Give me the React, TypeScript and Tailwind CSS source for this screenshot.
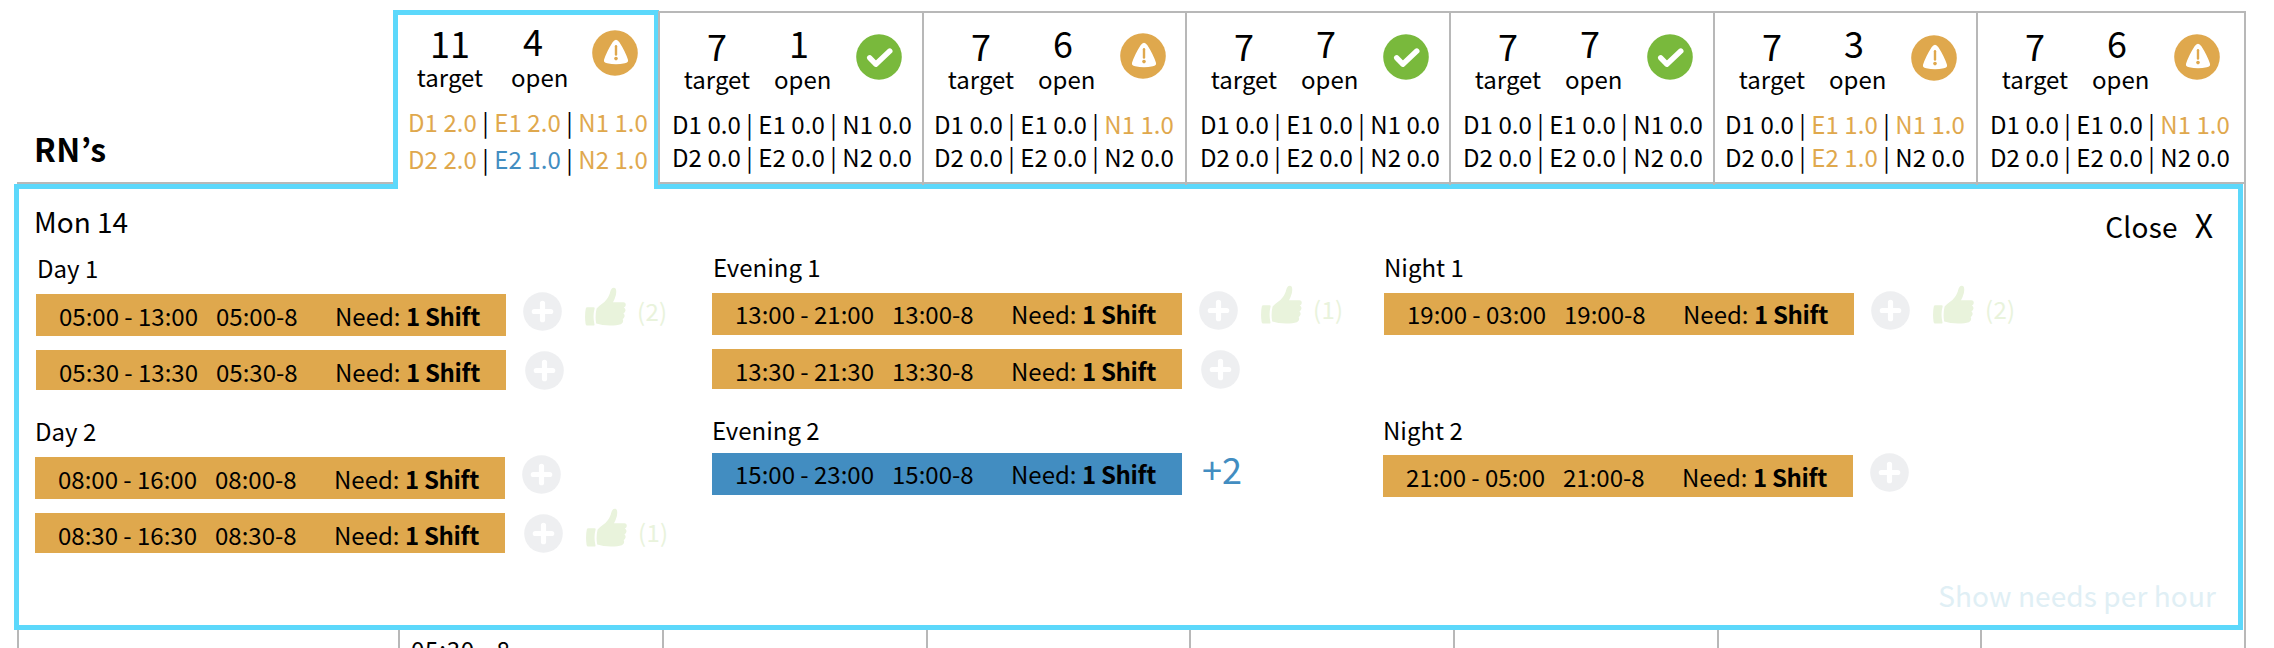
import React from "react";

type Tone = "ink" | "amber" | "blue";
type Part = [string, Tone];

const tones: Record<Tone, string> = {
  ink: "text-black",
  amber: "text-[#dfa84d]",
  blue: "text-[#428dc1]",
};

function Warning({ className = "" }: { className?: string }) {
  return (
    <svg viewBox="0 0 46 46" className={`h-[46px] w-[46px] shrink-0 ${className}`}>
      <circle cx="23" cy="23" r="22.8" fill="#dfa84d" />
      <path
        d="M20.6 12.2Q24 7.2 27.4 12.2Q33.4 21.6 35.9 29.6C36.6 32 35.4 32.8 32.8 33.3Q24 35.2 15.2 33.3C12.6 32.8 11.4 32 12.1 29.6Q14.6 21.6 20.6 12.2Z"
        fill="#fff"
      />
      <path d="M24 16.3V24.6" stroke="#dfa84d" strokeWidth="2.4" strokeLinecap="round" />
      <circle cx="24" cy="28.6" r="1.8" fill="#dfa84d" />
    </svg>
  );
}

function Check({ className = "" }: { className?: string }) {
  return (
    <svg viewBox="0 0 46 46" className={`h-[46px] w-[46px] shrink-0 ${className}`}>
      <circle cx="23" cy="23" r="22.8" fill="#79b93c" />
      <path
        d="M13.7 23.8L19.8 30.2L33.8 17"
        fill="none"
        stroke="#fff"
        strokeWidth="5.4"
        strokeLinecap="round"
        strokeLinejoin="round"
      />
    </svg>
  );
}

function Plus({ className = "" }: { className?: string }) {
  return (
    <svg viewBox="0 0 39 39" className={`h-[39px] w-[39px] shrink-0 ${className}`}>
      <circle cx="19.5" cy="19.5" r="19.3" fill="#eeeff1" />
      <path d="M19.5 11.3V27.7M11.3 19.5H27.7" stroke="#fff" strokeWidth="5.2" strokeLinecap="round" />
    </svg>
  );
}

function Thumb() {
  return (
    <svg viewBox="0 0 41 39" className="h-[39px] w-[41px] shrink-0" fill="#e9f3dc">
      <path d="M2.4 20.2H8.6Q10 20.2 9.6 21.6Q7.6 29.5 9.4 37Q9.8 38.6 8.4 38.6H2.2Q.8 38.6.6 37Q-.6 28.6.8 21.6Q1 20.2 2.4 20.2Z" />
      <path d="M28.6.8C31.6.6 31.6 4.6 30.8 8.2Q29.8 12 28 15.2H38.4C41.6 15.4 41.4 19.6 38.8 20.4C41.4 21.6 40.8 25.4 38.4 26.4C40.4 27.8 39.8 31 37.6 32C38.8 33.8 38 36.4 35.8 37.2Q32 38.6 25 38.6Q17 38.6 11.2 36.6Q9.8 29.4 11.6 21.6Q13.4 19.2 17.4 16.4Q22.4 13 24.8 6.4C25.6 3.8 26.2 1 28.6.8Z" />
    </svg>
  );
}

function Coverage({ parts, className }: { parts: Part[]; className: string }) {
  return (
    <div className={`whitespace-pre text-[24px] leading-[24px] tracking-[0.06px] ${className}`}>
      {parts.map(([text, tone], i) => (
        <React.Fragment key={i}>
          {i > 0 && " | "}
          <span className={tones[tone]}>{text}</span>
        </React.Fragment>
      ))}
    </div>
  );
}

interface DayCell {
  target: string;
  open: string;
  ok: boolean;
  width: string;
  icon: string;
  indent: string;
  rows: [Part[], Part[]];
}

const calm1: Part[] = [["D1 0.0", "ink"], ["E1 0.0", "ink"], ["N1 0.0", "ink"]];
const calm2: Part[] = [["D2 0.0", "ink"], ["E2 0.0", "ink"], ["N2 0.0", "ink"]];
const night1: Part[] = [["D1 0.0", "ink"], ["E1 0.0", "ink"], ["N1 1.0", "amber"]];

const days: DayCell[] = [
  { target: "7", open: "1", ok: true, width: "w-[264px]", icon: "mt-[21px]", indent: "pl-[12px]", rows: [calm1, calm2] },
  { target: "7", open: "6", ok: false, width: "w-[263px]", icon: "mt-[20px]", indent: "pl-[10px]", rows: [night1, calm2] },
  { target: "7", open: "7", ok: true, width: "w-[264px]", icon: "mt-[21px]", indent: "pl-[13px]", rows: [calm1, calm2] },
  { target: "7", open: "7", ok: true, width: "w-[264px]", icon: "mt-[21px]", indent: "pl-[12px]", rows: [calm1, calm2] },
  {
    target: "7", open: "3", ok: false, width: "w-[263px]", icon: "mt-[22px]", indent: "pl-[10px]",
    rows: [
      [["D1 0.0", "ink"], ["E1 1.0", "amber"], ["N1 1.0", "amber"]],
      [["D2 0.0", "ink"], ["E2 1.0", "amber"], ["N2 0.0", "ink"]],
    ],
  },
  { target: "7", open: "6", ok: false, width: "w-[268px]", icon: "mt-[21px]", indent: "pl-[12px]", rows: [night1, calm2] },
];

function DayHeader({ day }: { day: DayCell }) {
  return (
    <div className={`h-[172px] shrink-0 border-l-2 border-[#b8b8b8] ${day.width}`}>
      <div className="flex h-[88px] items-start">
        <div className="ml-[23px] flex w-[68px] flex-col items-center pt-[14px]">
          <span className="text-[36px] leading-[36px]">{day.target}</span>
          <span className="mt-[4px] text-[24px] leading-[24px]">target</span>
        </div>
        <div className="ml-[23px] w-[58px] pt-[11px]">
          <div className="ml-[15px] text-[36px] leading-[36px]">{day.open}</div>
          <div className="mt-[7px] text-[24px] leading-[24px]">open</div>
        </div>
        {day.ok ? <Check className={`ml-[24px] ${day.icon}`} /> : <Warning className={`ml-[24px] ${day.icon}`} />}
      </div>
      <Coverage parts={day.rows[0]} className={`mt-[11px] ${day.indent}`} />
      <Coverage parts={day.rows[1]} className={`mt-[9px] ${day.indent}`} />
    </div>
  );
}

function SelectedDay() {
  return (
    <div className="relative z-10 h-[179px] w-[266px] shrink-0 border-5 border-b-0 border-[#5cd8fb] bg-white">
      <div className="flex h-[88px] items-start">
        <div className="ml-[18px] flex w-[68px] flex-col items-center pt-[9px]">
          <span className="text-[36px] leading-[36px]">11</span>
          <span className="mt-[5px] text-[24px] leading-[24px]">target</span>
        </div>
        <div className="ml-[27px] w-[58px] pt-[7px]">
          <div className="ml-[12px] text-[36px] leading-[36px]">4</div>
          <div className="mt-[7px] text-[24px] leading-[24px]">open</div>
        </div>
        <Warning className="mt-[15px] ml-[23px]" />
      </div>
      <Coverage
        className="mt-[7px] pl-[10px]"
        parts={[["D1 2.0", "amber"], ["E1 2.0", "amber"], ["N1 1.0", "amber"]]}
      />
      <Coverage
        className="mt-[13px] pl-[10px]"
        parts={[["D2 2.0", "amber"], ["E2 1.0", "blue"], ["N2 1.0", "amber"]]}
      />
    </div>
  );
}

interface Shift {
  span: string;
  code: string;
  bar: string;
  plus?: string;
  extra?: string;
  likes?: string;
  likesBox?: string;
}

function ShiftRow({ shift }: { shift: Shift }) {
  return (
    <div className="flex h-[42px] items-start whitespace-pre text-[24px] leading-[24px]">
      <div className={`flex w-[470px] shrink-0 pl-[23px] ${shift.bar}`}>
        <span className="w-[157px]">{shift.span}</span>
        <span className="w-[119px]">{shift.code}</span>
        <span>
          Need: <b className="font-bold tracking-[-0.3px]">1 Shift</b>
        </span>
      </div>
      {shift.plus && <Plus className={shift.plus} />}
      {shift.likes && (
        <div className={`ml-[23px] flex items-start ${shift.likesBox}`}>
          <Thumb />
          <span className="mt-[12px] ml-[11px] tracking-[0.3px] text-[#e9f3dc]">{shift.likes}</span>
        </div>
      )}
      {shift.extra && (
        <span className="mt-[-3px] ml-[20px] text-[36px] leading-[36px] text-[#428dc1]">{shift.extra}</span>
      )}
    </div>
  );
}

interface Group {
  title: string;
  box: string;
  heading: string;
  shifts: Shift[];
}

const amberTall = "h-[42px] bg-[#dfa84d] pt-[10px]";
const amberMid = "h-[42px] bg-[#dfa84d] pt-[9px]";
const amberShort = "h-[40px] bg-[#dfa84d] pt-[10px]";
const plusFirst = "mt-[-2px] ml-[17px]";
const plusSecond = "mt-[1px] ml-[19px]";

const columns: { box: string; groups: Group[] }[] = [
  {
    box: "ml-[16px] w-[677px] pt-[66px]",
    groups: [
      {
        title: "Day 1", box: "h-[163px] pl-[1px]", heading: "pl-[1px] h-[39px]",
        shifts: [
          { span: "05:00 - 13:00", code: "05:00-8", bar: amberTall, plus: plusFirst, likes: "(2)", likesBox: "mt-[-7px]" },
          { span: "05:30 - 13:30", code: "05:30-8", bar: amberShort, plus: plusSecond },
        ],
      },
      {
        title: "Day 2", box: "", heading: "h-[39px]",
        shifts: [
          { span: "08:00 - 16:00", code: "08:00-8", bar: amberTall, plus: plusFirst },
          { span: "08:30 - 16:30", code: "08:30-8", bar: amberShort, plus: plusSecond, likes: "(1)", likesBox: "mt-[-5px]" },
        ],
      },
    ],
  },
  {
    box: "w-[671px] pt-[65px]",
    groups: [
      {
        title: "Evening 1", box: "h-[163px]", heading: "pl-[1px] h-[39px]",
        shifts: [
          { span: "13:00 - 21:00", code: "13:00-8", bar: amberMid, plus: plusFirst, likes: "(1)", likesBox: "mt-[-8px]" },
          { span: "13:30 - 21:30", code: "13:30-8", bar: amberShort, plus: plusSecond },
        ],
      },
      {
        title: "Evening 2", box: "", heading: "h-[36px]",
        shifts: [{ span: "15:00 - 23:00", code: "15:00-8", bar: "h-[42px] bg-[#428dc1] pt-[9px]", extra: "+2" }],
      },
    ],
  },
  {
    box: "w-[640px] pt-[65px]",
    groups: [
      {
        title: "Night 1", box: "h-[163px] pl-[1px]", heading: "h-[39px]",
        shifts: [{ span: "19:00 - 03:00", code: "19:00-8", bar: amberMid, plus: plusFirst, likes: "(2)", likesBox: "mt-[-8px]" }],
      },
      {
        title: "Night 2", box: "", heading: "h-[38px]",
        shifts: [{ span: "21:00 - 05:00", code: "21:00-8", bar: amberTall, plus: plusFirst }],
      },
    ],
  },
];

export default function App() {
  return (
    <div className="h-[648px] w-[2274px] overflow-hidden bg-white font-['Noto_Sans_CJK_KR','Noto_Sans',sans-serif] text-black">
      <header className="flex h-[189px] items-start pt-[10px]">
        <div className="mt-[1px] ml-[17px] flex h-[173px] w-[376px] shrink-0 items-end border-b-2 border-[#b8b8b8]">
          <h1 className="mb-[18px] ml-[17px] text-[32px] leading-[32px] font-bold tracking-[0.5px]">RN’s</h1>
        </div>
        <SelectedDay />
        <div className="relative z-20 mt-[1px] -ml-px flex h-[173px] w-[1588px] border-y-2 border-r-2 border-[#b8b8b8] bg-white">
          {days.map((day, i) => (
            <DayHeader key={i} day={day} />
          ))}
        </div>
      </header>

      <div className="-mt-[5px] ml-[14px] w-[2232px] border-r-2 border-[#b8b8b8]">
        <section className="flex h-[446px] w-[2229px] flex-col border-5 border-[#5cd8fb] bg-white">
          <div className="flex h-0 items-start justify-between text-[28px] leading-[28px]">
            <h2 className="mt-[18px] ml-[15px]">Mon 14</h2>
            <button className="mt-[19px] mr-[25px] flex items-baseline gap-[17px]">
              <span className="tracking-[0.2px]">Close</span>
              <span className="text-[32px] leading-[32px]">X</span>
            </button>
          </div>
          <div className="flex h-[396px]">
            {columns.map((column, i) => (
              <div key={i} className={`shrink-0 ${column.box}`}>
                {column.groups.map((group) => (
                  <div key={group.title} className={group.box}>
                    <h3 className={`pt-[1px] text-[24px] leading-[24px] ${group.heading}`}>{group.title}</h3>
                    <div className="flex flex-col gap-[14px]">
                      {group.shifts.map((shift) => (
                        <ShiftRow key={shift.code} shift={shift} />
                      ))}
                    </div>
                  </div>
                ))}
              </div>
            ))}
          </div>
          <a className="mt-[-4px] mr-[22px] self-end text-[28px] leading-[28px] tracking-[0.1px] text-[#e0eff5]">
            Show needs per hour
          </a>
        </section>
      </div>

      <div className="ml-[17px] flex h-[18px] w-[2229px] border-x-2 border-[#b8b8b8]">
        <div className="w-[379px] shrink-0" />
        <div className="w-[264px] shrink-0 border-l-2 border-[#b8b8b8] pt-[7px] pl-[11px] text-[24px] leading-[24px] tracking-[0.8px]">
          05:30 - 8
        </div>
        <div className="w-[264px] shrink-0 border-l-2 border-[#b8b8b8]" />
        <div className="w-[263px] shrink-0 border-l-2 border-[#b8b8b8]" />
        <div className="w-[264px] shrink-0 border-l-2 border-[#b8b8b8]" />
        <div className="w-[264px] shrink-0 border-l-2 border-[#b8b8b8]" />
        <div className="w-[263px] shrink-0 border-l-2 border-[#b8b8b8]" />
        <div className="w-[262px] shrink-0 border-l-2 border-[#b8b8b8]" />
      </div>
    </div>
  );
}
